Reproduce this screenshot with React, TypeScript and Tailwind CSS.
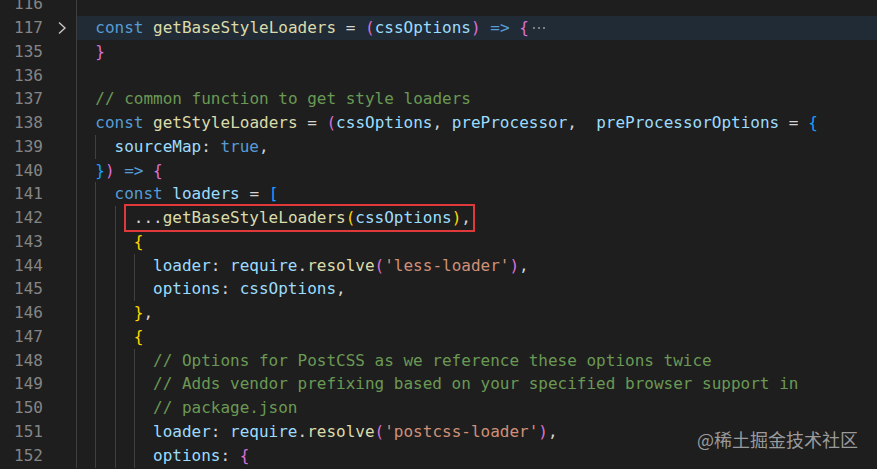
import React from "react";

type Tok = [string, string];

const K = "text-[#569cd6]";
const F = "text-[#dcdcaa]";
const V = "text-[#9cdcfe]";
const P = "text-[#d4d4d4]";
const C = "text-[#6a9955]";
const S = "text-[#ce9178]";
const Y = "text-[#ffd700]";
const O = "text-[#da70d6]";
const B = "text-[#179fff]";

type Line = {
  n: number;
  indent: number;
  guides: number[];
  toks: Tok[];
  folded?: boolean;
  boxed?: boolean;
};

const lines: Line[] = [
  { n: 116, indent: 0, guides: [0], toks: [] },
  {
    n: 117,
    indent: 2,
    guides: [0],
    folded: true,
    toks: [
      ["const", K],
      [" ", P],
      ["getBaseStyleLoaders", F],
      [" = ", P],
      ["(", O],
      ["cssOptions", V],
      [")", O],
      [" ", P],
      ["=>", K],
      [" ", P],
      ["{", O],
    ],
  },
  { n: 135, indent: 2, guides: [0], toks: [["}", O]] },
  { n: 136, indent: 0, guides: [0], toks: [] },
  { n: 137, indent: 2, guides: [0], toks: [["// common function to get style loaders", C]] },
  {
    n: 138,
    indent: 2,
    guides: [0],
    toks: [
      ["const", K],
      [" ", P],
      ["getStyleLoaders", F],
      [" = ", P],
      ["(", O],
      ["cssOptions", V],
      [", ", P],
      ["preProcessor", V],
      [",  ", P],
      ["preProcessorOptions", V],
      [" = ", P],
      ["{", B],
    ],
  },
  {
    n: 139,
    indent: 4,
    guides: [0, 2],
    toks: [
      ["sourceMap", V],
      [": ", P],
      ["true", K],
      [",", P],
    ],
  },
  {
    n: 140,
    indent: 2,
    guides: [0],
    toks: [
      ["}", B],
      [")", O],
      [" ", P],
      ["=>", K],
      [" ", P],
      ["{", O],
    ],
  },
  {
    n: 141,
    indent: 4,
    guides: [0, 2],
    toks: [
      ["const", K],
      [" ", P],
      ["loaders", V],
      [" = ", P],
      ["[", B],
    ],
  },
  {
    n: 142,
    indent: 6,
    guides: [0, 2, 4],
    boxed: true,
    toks: [
      ["...", P],
      ["getBaseStyleLoaders", F],
      ["(", Y],
      ["cssOptions", V],
      [")", Y],
      [",", P],
    ],
  },
  { n: 143, indent: 6, guides: [0, 2, 4], toks: [["{", Y]] },
  {
    n: 144,
    indent: 8,
    guides: [0, 2, 4, 6],
    toks: [
      ["loader", V],
      [": ", P],
      ["require", V],
      [".", P],
      ["resolve", F],
      ["(", O],
      ["'less-loader'", S],
      [")", O],
      [",", P],
    ],
  },
  {
    n: 145,
    indent: 8,
    guides: [0, 2, 4, 6],
    toks: [
      ["options", V],
      [": ", P],
      ["cssOptions", V],
      [",", P],
    ],
  },
  {
    n: 146,
    indent: 6,
    guides: [0, 2, 4],
    toks: [
      ["}", Y],
      [",", P],
    ],
  },
  { n: 147, indent: 6, guides: [0, 2, 4], toks: [["{", Y]] },
  {
    n: 148,
    indent: 8,
    guides: [0, 2, 4, 6],
    toks: [["// Options for PostCSS as we reference these options twice", C]],
  },
  {
    n: 149,
    indent: 8,
    guides: [0, 2, 4, 6],
    toks: [["// Adds vendor prefixing based on your specified browser support in", C]],
  },
  { n: 150, indent: 8, guides: [0, 2, 4, 6], toks: [["// package.json", C]] },
  {
    n: 151,
    indent: 8,
    guides: [0, 2, 4, 6],
    toks: [
      ["loader", V],
      [": ", P],
      ["require", V],
      [".", P],
      ["resolve", F],
      ["(", O],
      ["'postcss-loader'", S],
      [")", O],
      [",", P],
    ],
  },
  {
    n: 152,
    indent: 8,
    guides: [0, 2, 4, 6],
    toks: [
      ["options", V],
      [": ", P],
      ["{", O],
    ],
  },
];

function Chevron() {
  return (
    <svg width="10" height="14" viewBox="0 0 10 14" fill="none">
      <polyline points="2,1.5 8,7 2,12.5" stroke="#c5c5c5" strokeWidth="1.4" fill="none" />
    </svg>
  );
}

function FoldDots() {
  return (
    <span className="ml-[4px] flex h-full items-center gap-[3px]">
      <span className="h-[2px] w-[2px] rounded-full bg-[#9a9a9a]" />
      <span className="h-[2px] w-[2px] rounded-full bg-[#9a9a9a]" />
      <span className="h-[2px] w-[2px] rounded-full bg-[#9a9a9a]" />
    </span>
  );
}

function CodeLine({ line }: { line: Line }) {
  const levels = Math.max(line.indent / 2, line.guides.length);
  const indents = [] as React.ReactNode[];
  for (let i = 0; i < levels; i++) {
    const hasGuide = line.guides.includes(i * 2);
    indents.push(
      <span
        key={i}
        className={
          hasGuide
            ? "inline-block h-full w-[19.26px] shrink-0 border-l border-[#404040]"
            : "inline-block h-full w-[19.26px] shrink-0"
        }
      />
    );
  }
  return (
    <div
      className={
        line.folded
          ? "relative flex h-full flex-1 items-stretch bg-[#212b35]"
          : "relative flex h-full flex-1 items-stretch"
      }
    >
      {indents}
      <span className="flex items-center whitespace-pre">
        {line.toks.map((t, i) => (
          <span key={i} className={t[1]}>
            {t[0]}
          </span>
        ))}
      </span>
      {line.folded ? <FoldDots /> : null}
      {line.boxed ? (
        <span className="pointer-events-none absolute left-[48px] top-[-2px] h-[28px] w-[351px] border-[2.5px] border-[#e0393b]" />
      ) : null}
    </div>
  );
}

export default function App() {
  return (
    <div className="relative h-[469px] w-[877px] overflow-hidden bg-[#1e1e1e] font-['DejaVu_Sans_Mono',monospace] text-[16px]">
      <div className="mt-[-7.8px] flex flex-col">
        {lines.map((line) => (
          <div key={line.n} className="flex h-[23.78px] items-stretch leading-[23.78px]">
            <div className="w-[43px] shrink-0 text-right text-[#858585]">{line.n}</div>
            <div className="flex w-[33px] shrink-0 items-center justify-center pl-[4px]">
              {line.folded ? <Chevron /> : null}
            </div>
            <CodeLine line={line} />
          </div>
        ))}
      </div>
      <div className="absolute right-[19px] top-[428px] font-['Noto_Sans_CJK_SC',sans-serif] text-[18px] leading-[22px] text-[#9a9a9a]">
        @稀土掘金技术社区
      </div>
    </div>
  );
}
